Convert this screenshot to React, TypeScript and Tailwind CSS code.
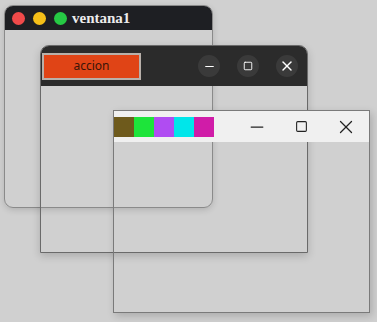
import { Minus, Square, X } from "lucide-react"

const swatches = ["#6e5a1c", "#1de43a", "#b04cf2", "#00e6ea", "#d01ca8"]

function MacWindow() {
  return (
    <div className="absolute left-[4px] top-[5px] w-[209px] h-[203px] rounded-[9px] border border-[#8a8a8a] overflow-hidden shadow-[0_2px_6px_rgba(0,0,0,0.15)]">
      <div className="flex items-center h-[24px] bg-[#1e1f23] pl-[7px] gap-[8px]">
        <span className="w-[13px] h-[13px] rounded-full bg-[#f04a4a]" />
        <span className="w-[13px] h-[13px] rounded-full bg-[#f5bf18]" />
        <span className="w-[13px] h-[13px] rounded-full bg-[#26c944]" />
        <span className="-ml-[3px] text-[15px] font-bold text-[#ececec] font-['Liberation_Serif',serif] leading-none">ventana1</span>
      </div>
    </div>
  )
}

function DarkWindow() {
  const sizes = [13, 10, 16]
  return (
    <div className="absolute left-[40px] top-[45px] w-[268px] h-[208px] rounded-t-[9px] border border-[#6a6a6a] overflow-hidden shadow-[0_3px_8px_rgba(0,0,0,0.18)]">
      <div className="flex items-center h-[40px] bg-[#2b2b2b] pl-[1px] pr-[9px]">
        <button className="w-[99px] h-[27px] bg-[#e04416] border-2 border-[#b8b0aa] text-[12px] text-[#3a1408] font-['Noto_Sans',sans-serif]">
          accion
        </button>
        <div className="ml-auto flex items-center gap-[17px]">
          {[Minus, Square, X].map((Icon, i) => (
            <span key={i} className="w-[22px] h-[22px] rounded-full bg-[#3a3a3a] flex items-center justify-center text-white">
              <Icon size={sizes[i]} strokeWidth={2.2} />
            </span>
          ))}
        </div>
      </div>
    </div>
  )
}

function LightWindow() {
  return (
    <div className="absolute left-[113px] top-[110px] w-[257px] h-[203px] border border-[#7a7a7a] shadow-[2px_3px_8px_rgba(0,0,0,0.18)]">
      <div className="flex items-center h-[31px] bg-[#f0f0f0]">
        <div className="flex">
          {swatches.map(c => (
            <span key={c} className="w-[20px] h-[20px]" style={{ background: c }} />
          ))}
        </div>
        <div className="ml-auto flex items-center text-[#222]">
          <span className="w-[44px] flex justify-center"><Minus size={20} strokeWidth={1.5} /></span>
          <span className="w-[44px] flex justify-center"><Square size={13} strokeWidth={2} /></span>
          <span className="w-[46px] flex justify-center"><X size={22} strokeWidth={1.4} /></span>
        </div>
      </div>
    </div>
  )
}

export default function App() {
  return (
    <div className="relative w-[377px] h-[322px] bg-[#d0d0d0] overflow-hidden">
      <MacWindow />
      <DarkWindow />
      <LightWindow />
    </div>
  )
}
